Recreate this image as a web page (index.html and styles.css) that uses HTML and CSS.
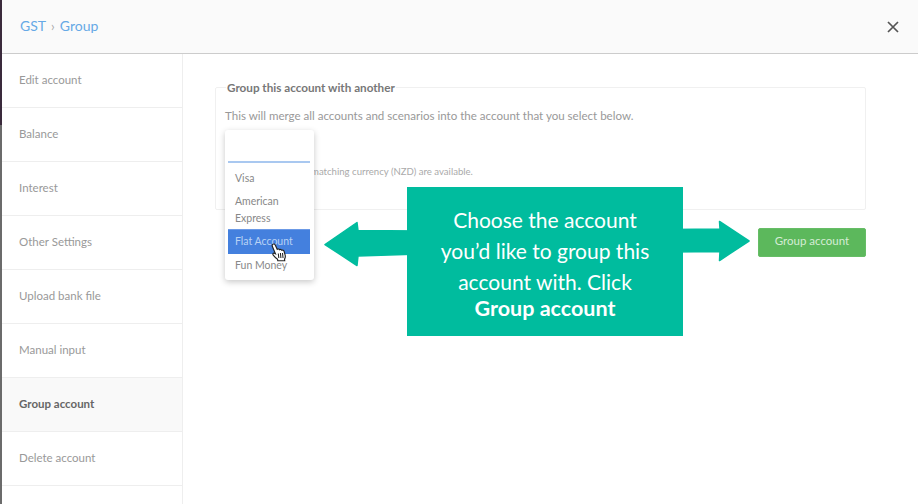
FILE: index.html
```html
<!DOCTYPE html>
<html lang="en">
<head>
<meta charset="utf-8">
<title>GST Group</title>
<link rel="stylesheet" href="styles.css">
</head>
<body>
<div class="app">
  <div class="edge"></div>
  <div class="modal">
    <header class="head">
      <div class="crumbs"><span>GST</span><span class="sep">›</span><span>Group</span></div>
      <svg class="close" width="12" height="12" viewBox="0 0 12 12"><path d="M1 1L11 11M11 1L1 11"/></svg>
    </header>
    <div class="body">
      <nav class="side">
        <a class="item">Edit account</a>
        <a class="item">Balance</a>
        <a class="item">Interest</a>
        <a class="item">Other Settings</a>
        <a class="item">Upload bank file</a>
        <a class="item">Manual input</a>
        <a class="item active">Group account</a>
        <a class="item">Delete account</a>
      </nav>
      <main class="main">
        <fieldset class="box">
          <legend class="legend">Group this account with another</legend>
          <p class="intro">This will merge all accounts and scenarios into the account that you select below.</p>
          <p class="note">matching currency (NZD) are available.</p>
        </fieldset>
        <div class="actions"><button class="btn">Group account</button></div>
      </main>
    </div>
  </div>

  <div class="menu">
    <div class="search"></div>
    <div class="opt">Visa</div>
    <div class="opt wrap">American Express</div>
    <div class="opt sel">Flat Account</div>
    <div class="opt">Fun Money</div>
  </div>

  <svg class="cursor" width="17" height="19" viewBox="0 0 16 18">
    <path class="hand" d="M2.500 1.300c.9-.7 2-.3 2.400.7L6.800 6c.9-.6 1.800-.4 2.200.3.900-.5 1.800-.2 2.100.5.900-.3 1.900.1 2.200 1.100l1 3.600c.4 1.500.1 2.700-.6 3.700l.2 1.600H7.300l-.2-1.400C5.500 14.400 4.200 12.900 3 11.400c-.8-1-.1-2.100 1.100-1.700l1 .5L2.200 3.400c-.3-.8-.2-1.600.3-2.100z"/>
    <path class="lines" d="M7.800 10l.5 4.200M9.800 9.500l.5 4.700M11.800 9.500l.5 4.700"/>
  </svg>

  <svg class="arrows" width="918" height="504" viewBox="0 0 918 504">
    <path class="arrow" d="M325 244.500L357 222.500L358 230.500L420 231L420 254L358 256L357 265.500Z"/>
    <path class="arrow" d="M670 229.500L720 229L719.500 221.500L749 241L719.500 260.500L720 251.500L670 252Z"/>
  </svg>

  <div class="callout">
    Choose the account<br>you’d like to group this<br>account with. Click<strong class="strong">Group account</strong>
  </div>
</div>
</body>
</html>
```
FILE: styles.css
```css
* { box-sizing: border-box; }
html, body { margin: 0; padding: 0; }
body { font-family: "Lato", "Liberation Sans", sans-serif; color: #777; background: #fff; }
.app { position: relative; width: 918px; height: 504px; overflow: hidden; display: flex; }
.edge { width: 2px; flex: none; background: linear-gradient(#3a2a3c 0, #3a2a3c 125px, #6b6b6b 125px, #6b6b6b 100%); }
.modal { flex: 1; display: flex; flex-direction: column; min-width: 0; }
.head { height: 54px; flex: none; background: #fafafa; border-bottom: 1px solid #ccc; display: flex; align-items: center; justify-content: space-between; padding: 0 19px 2px 18px; }
.crumbs { display: flex; gap: 5px; align-items: center; font-size: 14px; color: #66a9e6; }
.sep { color: #aaa; font-size: 13px; }
.close { fill: none; stroke: #555; stroke-width: 1.7; margin-top: 2px; }
.body { flex: 1; display: flex; min-height: 0; }
.side { width: 181px; flex: none; border-right: 1px solid #eee; }
.item { display: flex; align-items: center; height: 54px; padding: 0 0 2px 17px; font-size: 11.500px; color: #999; border-bottom: 1px solid #eee; }
.item.active { background: #f9f9f9; color: #666; font-weight: 700; }
.main { flex: 1; padding: 26px 52px 0 32px; display: flex; flex-direction: column; min-width: 0; }
.box { margin: 0; height: 130px; border: 1px solid #f0f0f0; border-radius: 2px; padding: 14px 9px 0; min-width: 0; }
.legend { padding: 0 1px; margin-left: 1px; font-size: 11.700px; font-weight: 700; color: #777; }
.intro { margin: 0; font-size: 11.550px; color: #999; line-height: 16px; }
.note { margin: 42px 0 0 86px; font-size: 9.600px; line-height: 12px; color: #aaa; }
.actions { display: flex; justify-content: flex-end; margin-top: 18px; }
.btn { width: 108px; height: 29px; border: 1px solid #66bd66; border-radius: 2px; background: #5cb85c; color: #d5ecd5; font: 11.500px "Lato", "Liberation Sans", sans-serif; padding: 0 0 4px; }
.menu { position: absolute; left: 225px; top: 130px; width: 89px; height: 150px; background: #fff; border-radius: 3px; box-shadow: 0 2px 6px rgba(0, 0, 0, .22); padding: 0 4px 0 3px; font-size: 10.500px; color: #888; }
.search { height: 33px; border-bottom: 2px solid #a9c8f0; margin-bottom: 7px; }
.opt { padding: 0 7px; line-height: 17px; margin-bottom: 6px; }
.opt.wrap { margin-bottom: 2px; }
.opt.sel { background: #4480de; color: #b8d2f5; padding: 3px 7px; height: 25px; border-top: 1px solid #6c9ae6; margin-bottom: 3px; }
.cursor { position: absolute; left: 270px; top: 243px; }
.hand { fill: #fff; stroke: #222; stroke-width: 1.100; }
.lines { stroke: #222; stroke-width: 1; fill: none; }
.arrows { position: absolute; left: 0; top: 0; }
.arrow { fill: #00bc9e; stroke: #00bc9e; stroke-width: 1.500; stroke-linejoin: round; }
.callout { position: absolute; left: 407px; top: 187px; width: 276px; height: 149px; background: #00bc9e; color: #fff; font-size: 21px; line-height: 31px; text-align: center; padding-top: 17px; }
.strong { display: block; margin-top: -4px; font-weight: 700; font-size: 21.500px; }
```
